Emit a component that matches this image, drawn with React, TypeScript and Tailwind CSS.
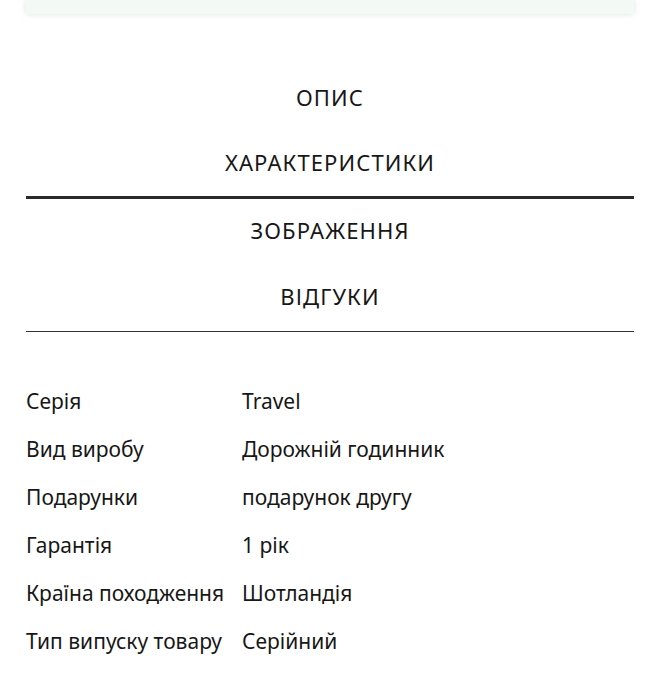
import React from "react";

const rows: [string, string][] = [
  ["Серія", "Travel"],
  ["Вид виробу", "Дорожній годинник"],
  ["Подарунки", "подарунок другу"],
  ["Гарантія", "1 рік"],
  ["Країна походження", "Шотландія"],
  ["Тип випуску товару", "Серійний"],
];

export default function App() {
  return (
    <div
      className="w-[660px] h-[699px] bg-white text-[#171717] overflow-hidden"
      style={{ fontFamily: '"Noto Sans", "Open Sans", sans-serif' }}
    >
      <div className="px-[26px]">
        <div className="h-[14px] bg-[#f3faf5] shadow-[0_0_6px_rgba(200,210,200,0.6)]" />
      </div>
      <div className="px-[26px] pt-[52px]">
        <div className="h-[65px] pb-[3px] flex items-center justify-center text-[22px] tracking-[1.1px]">ОПИС</div>
        <div className="h-[68px] pb-[2px] flex items-center justify-center text-[22px] tracking-[1.1px] border-b-[3px] border-[#2a2a2a]">
          ХАРАКТЕРИСТИКИ
        </div>
        <div className="h-[66px] pb-[3px] flex items-center justify-center text-[22px] tracking-[1.1px]">ЗОБРАЖЕННЯ</div>
        <div className="h-[67px] pb-[3px] flex items-center justify-center text-[22px] tracking-[1.1px] border-b border-[#333]">ВІДГУКИ</div>
      </div>
      <div className="px-[26px] pt-[46px]">
        {rows.map(([k, v]) => (
          <div key={k} className="h-[48px] flex items-center text-[21px]">
            <div className="w-[216px] shrink-0">{k}</div>
            <div>{v}</div>
          </div>
        ))}
      </div>
    </div>
  );
}
